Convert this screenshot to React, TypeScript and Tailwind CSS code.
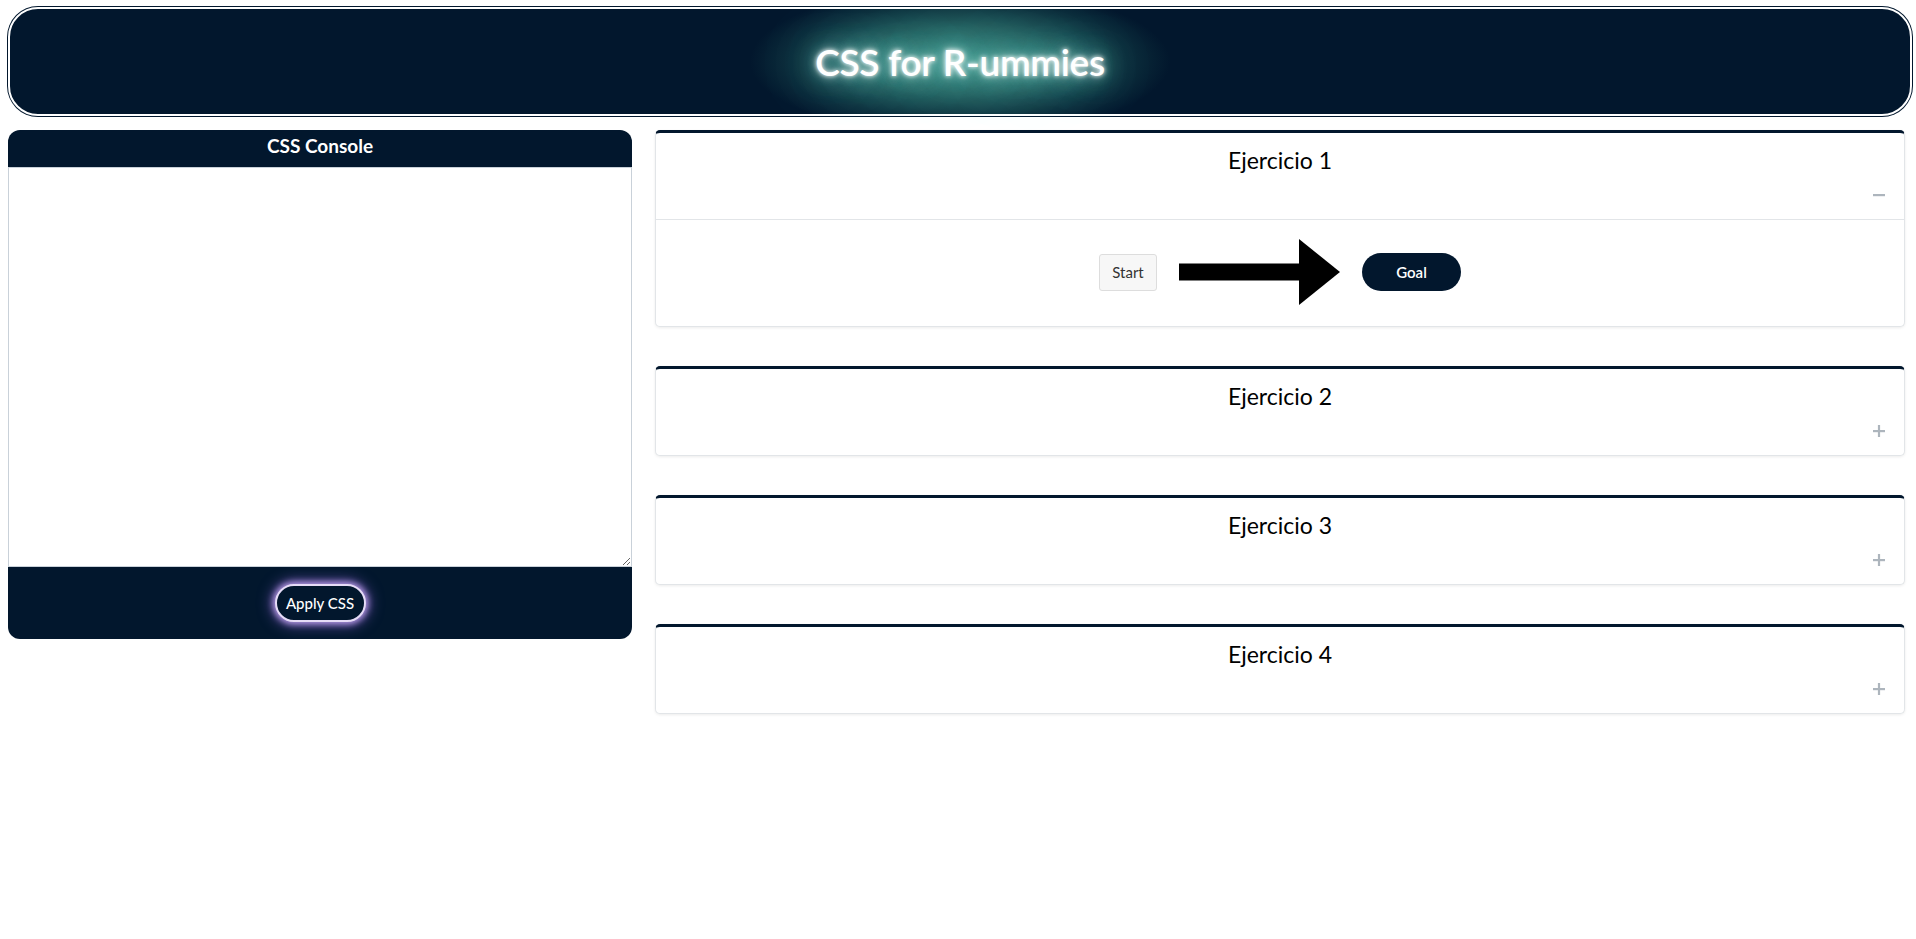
const EXERCISES = [
  { title: "Ejercicio 1", open: true },
  { title: "Ejercicio 2", open: false },
  { title: "Ejercicio 3", open: false },
  { title: "Ejercicio 4", open: false },
];

function ToggleIcon({ open }: { open: boolean }) {
  return (
    <svg width="14" height="14" viewBox="0 0 14 14" className="text-[#adb5bd]">
      <rect x="1" y="6" width="12" height="2.2" fill="currentColor" />
      {!open && <rect x="5.9" y="1" width="2.2" height="12" fill="currentColor" />}
    </svg>
  );
}

function Arrow() {
  return (
    <svg width="161" height="66" viewBox="0 0 161 66">
      <rect x="0" y="24.5" width="121" height="17" fill="#000" />
      <polygon points="120,0 161,33 120,66" fill="#000" />
    </svg>
  );
}

function ExerciseItem({ title, open }: { title: string; open: boolean }) {
  return (
    <div className="rounded-[5px] border border-[#e2e5e8] border-t-[3px] border-t-[#02172d] bg-white shadow-[0_1px_3px_rgba(0,0,0,0.08)]">
      <div className="px-[18px] pt-[12px] pb-[12px]">
        <div className="text-center text-[23px] leading-[30px] text-black">{title}</div>
        <div className="mt-[8px] flex h-[24px] items-center justify-end">
          <ToggleIcon open={open} />
        </div>
      </div>
      {open && (
        <div className="flex items-center justify-center gap-[22px] border-t border-[#e2e5e8] pt-[19px] pb-[21px]">
          <button className="h-[37px] w-[58px] rounded-[3px] border border-[#dddddd] bg-[#f7f7f7] text-[15px] text-[#333]">
            Start
          </button>
          <Arrow />
          <button className="h-[38px] w-[99px] rounded-full bg-[#02172d] text-[15px] font-semibold text-white">
            Goal
          </button>
        </div>
      )}
    </div>
  );
}

export default function App() {
  return (
    <div className="min-h-screen bg-white pt-[7px] font-['Lato',_'Liberation_Sans',_sans-serif]">
      <header className="ml-[8px] mr-[4px] flex h-[109px] items-center justify-center rounded-[30px] border-2 border-white bg-[#02172d] bg-[radial-gradient(ellipse_210px_75px_at_50%_50%,#3c8c82_0%,#235f5e_45%,#0c2f3c_78%,#02172d_100%)] shadow-[0_0_0_1px_#02172d]">
        <h1 className="text-[37px] font-semibold tracking-[-0.3px] text-white [text-shadow:0_0_4px_#fff,0_0_10px_#ffffffc0,0_0_24px_#6fe0d2,0_0_70px_#8ff0e4]">
          CSS for R-ummies
        </h1>
      </header>

      <div className="flex items-start gap-[23px] pl-[8px] pr-[11px] pt-[14px]">
        <section className="flex w-[624px] shrink-0 flex-col overflow-hidden rounded-[12px] bg-[#02172d]">
          <div className="flex h-[37px] items-center justify-center pb-[5px] text-[19px] font-bold text-white">CSS Console</div>
          <textarea className="block h-[400px] w-full border border-[#c9d1d9] bg-white p-2 font-mono text-[14px] outline-none" />
          <div className="flex h-[72px] items-center justify-center">
            <button className="h-[38px] w-[91px] rounded-full border-2 border-[#e6dcf7] bg-[#02172d] text-[15px] font-medium text-white shadow-[0_0_6px_2px_#b79ce6,0_0_14px_4px_#7e5cc4aa]">
              Apply CSS
            </button>
          </div>
        </section>

        <section className="flex flex-1 flex-col gap-[39px]">
          {EXERCISES.map((ex) => (
            <ExerciseItem key={ex.title} title={ex.title} open={ex.open} />
          ))}
        </section>
      </div>
    </div>
  );
}
